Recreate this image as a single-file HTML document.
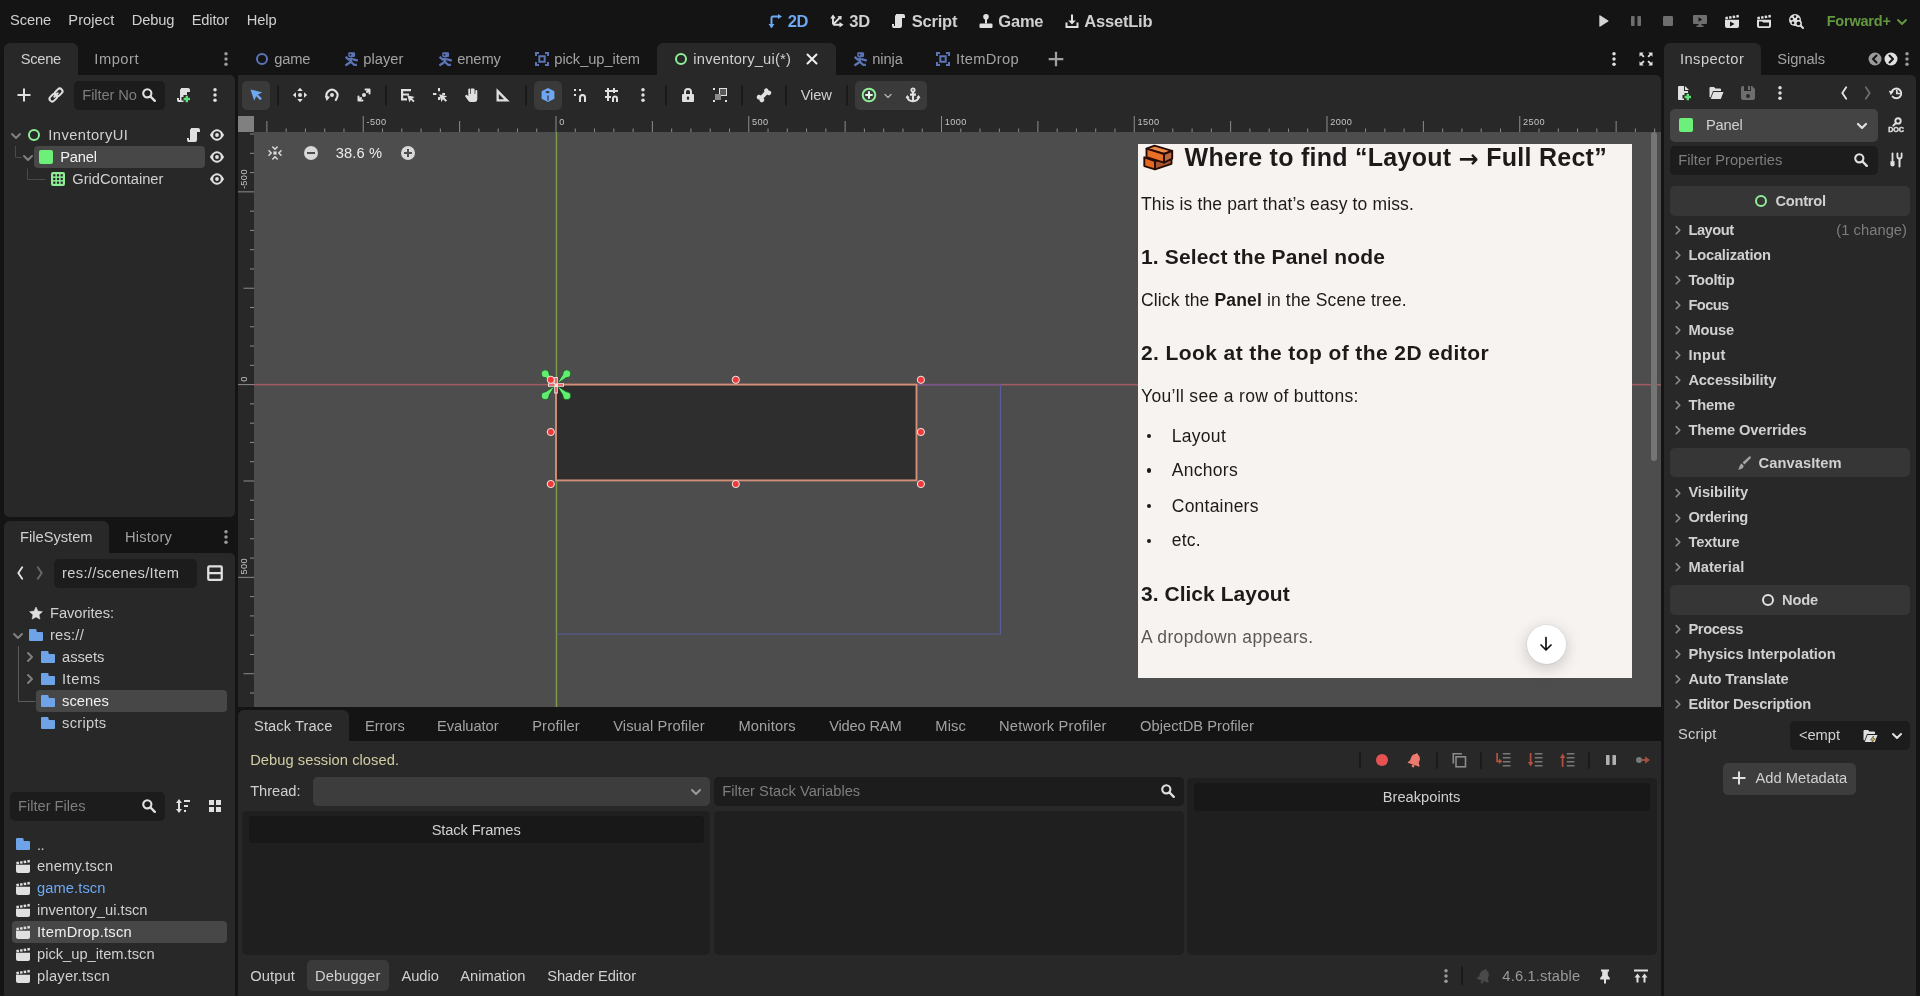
<!DOCTYPE html>
<html lang="en"><head><meta charset="utf-8"><title>Godot Editor - inventory_ui</title>
<style>
html,body{margin:0;padding:0;}
body{width:1920px;height:996px;overflow:hidden;background:#141414;font-family:"Liberation Sans", sans-serif;position:relative;}
#root{position:absolute;left:0;top:0;width:1920px;height:996px;overflow:hidden;will-change:transform;}
#root>div,#root>svg,#root>span{position:absolute;}
#root>span{white-space:nowrap;}
#root>svg{overflow:visible;}
</style></head><body><div id="root">
<div style="left:4px;top:43px;width:74px;height:33px;background:#282828;border-radius:6px 6px 0 0;"></div>
<div style="left:4px;top:75px;width:231px;height:442px;background:#282828;border-radius:0 5px 5px 5px;"></div>
<div style="left:4px;top:521px;width:105px;height:33px;background:#282828;border-radius:6px 6px 0 0;"></div>
<div style="left:4px;top:553px;width:231px;height:443px;background:#282828;border-radius:0 5px 0 0;"></div>
<div style="left:238px;top:75px;width:1423px;height:632px;background:#282828;border-radius:0 5px 0 0;"></div>
<div style="left:657px;top:43px;width:179px;height:33px;background:#282828;border-radius:6px 6px 0 0;"></div>
<div style="left:238px;top:710px;width:1423px;height:286px;background:#282828;border-radius:0px;"></div>
<div style="left:238px;top:710px;width:1423px;height:31px;background:#141414;border-radius:0px;"></div>
<div style="left:238px;top:710px;width:111px;height:32px;background:#282828;border-radius:6px 6px 0 0;"></div>
<div style="left:1664px;top:43px;width:97px;height:33px;background:#282828;border-radius:6px 6px 0 0;"></div>
<div style="left:1664px;top:75px;width:252px;height:921px;background:#282828;border-radius:0 5px 0 0;"></div>
<span style="left:10.0px;top:11.0px;font-size:14.7px;line-height:18px;color:#d0d0d0;letter-spacing:-0.13px;">Scene</span>
<span style="left:68.3px;top:11.0px;font-size:14.7px;line-height:18px;color:#d0d0d0;letter-spacing:0.04px;">Project</span>
<span style="left:131.7px;top:11.0px;font-size:14.7px;line-height:18px;color:#d0d0d0;letter-spacing:-0.14px;">Debug</span>
<span style="left:191.7px;top:11.0px;font-size:14.7px;line-height:18px;color:#d0d0d0;letter-spacing:-0.18px;">Editor</span>
<span style="left:246.7px;top:11.0px;font-size:14.7px;line-height:18px;color:#d0d0d0;letter-spacing:-0.05px;">Help</span>
<span style="left:787.7px;top:10.5px;font-size:16.5px;line-height:21px;color:#6ea8f2;font-weight:700;letter-spacing:-0.25px;">2D</span>
<span style="left:849.3px;top:10.5px;font-size:16.5px;line-height:21px;color:#d0d0d0;font-weight:700;letter-spacing:-0.20px;">3D</span>
<span style="left:911.7px;top:10.5px;font-size:16.5px;line-height:21px;color:#d0d0d0;font-weight:700;letter-spacing:-0.19px;">Script</span>
<span style="left:998.3px;top:10.5px;font-size:16.5px;line-height:21px;color:#d0d0d0;font-weight:700;letter-spacing:-0.21px;">Game</span>
<span style="left:1084.3px;top:10.5px;font-size:16.5px;line-height:21px;color:#d0d0d0;font-weight:700;letter-spacing:-0.21px;">AssetLib</span>
<span style="left:1826.7px;top:12.0px;font-size:14.5px;line-height:18px;color:#639841;font-weight:700;letter-spacing:-0.21px;">Forward+</span>
<span style="left:20.7px;top:50.0px;font-size:14.7px;line-height:18px;color:#d0d0d0;letter-spacing:-0.27px;">Scene</span>
<span style="left:94.3px;top:50.0px;font-size:14.7px;line-height:18px;color:#a3a3a3;letter-spacing:0.51px;">Import</span>
<div style="left:74px;top:81px;width:91px;height:29px;background:#1c1c1c;border-radius:5px;"></div>
<span style="left:82.3px;top:86.0px;font-size:14.7px;line-height:18px;color:#7d7d7d;letter-spacing:-0.12px;">Filter No</span>
<div style="left:34px;top:146px;width:171px;height:22px;background:#474747;border-radius:4px;"></div>
<span style="left:48.3px;top:126.0px;font-size:14.7px;line-height:18px;color:#d0d0d0;letter-spacing:0.44px;">InventoryUI</span>
<span style="left:60.3px;top:148.0px;font-size:14.7px;line-height:18px;color:#f0f0f0;letter-spacing:-0.24px;">Panel</span>
<span style="left:72.3px;top:170.0px;font-size:14.7px;line-height:18px;color:#d0d0d0;letter-spacing:-0.03px;">GridContainer</span>
<div style="left:39.3px;top:150px;width:13.5px;height:14px;background:#6df07a;border-radius:2px;"></div>
<span style="left:20.0px;top:528.0px;font-size:14.7px;line-height:18px;color:#d0d0d0;letter-spacing:-0.01px;">FileSystem</span>
<span style="left:125.0px;top:528.0px;font-size:14.7px;line-height:18px;color:#a3a3a3;letter-spacing:0.19px;">History</span>
<div style="left:54px;top:559px;width:143px;height:29px;background:#1c1c1c;border-radius:5px;"></div>
<span style="left:62.0px;top:564.0px;font-size:14.7px;line-height:18px;color:#d0d0d0;letter-spacing:0.33px;">res://scenes/Item</span>
<div style="left:36px;top:690px;width:191px;height:22px;background:#474747;border-radius:4px;"></div>
<span style="left:50.0px;top:604.0px;font-size:14.7px;line-height:18px;color:#d0d0d0;letter-spacing:-0.05px;">Favorites:</span>
<span style="left:50.0px;top:626.0px;font-size:14.7px;line-height:18px;color:#d0d0d0;letter-spacing:0.22px;">res://</span>
<span style="left:62.0px;top:648.0px;font-size:14.7px;line-height:18px;color:#d0d0d0;">assets</span>
<span style="left:62.0px;top:670.0px;font-size:14.7px;line-height:18px;color:#d0d0d0;letter-spacing:0.52px;">Items</span>
<span style="left:62.0px;top:692.0px;font-size:14.7px;line-height:18px;color:#f0f0f0;letter-spacing:0.08px;">scenes</span>
<span style="left:62.0px;top:714.0px;font-size:14.7px;line-height:18px;color:#d0d0d0;letter-spacing:0.29px;">scripts</span>
<div style="left:10px;top:792px;width:155px;height:29px;background:#1c1c1c;border-radius:5px;"></div>
<span style="left:18.0px;top:797.0px;font-size:14.7px;line-height:18px;color:#7d7d7d;letter-spacing:-0.02px;">Filter Files</span>
<div style="left:12px;top:921px;width:215px;height:22px;background:#474747;border-radius:4px;"></div>
<span style="left:37.0px;top:836.0px;font-size:14.7px;line-height:18px;color:#d0d0d0;letter-spacing:-0.59px;">..</span>
<span style="left:37.0px;top:857.0px;font-size:14.7px;line-height:18px;color:#d0d0d0;letter-spacing:0.20px;">enemy.tscn</span>
<span style="left:37.0px;top:879.0px;font-size:14.7px;line-height:18px;color:#6ea8f2;letter-spacing:0.08px;">game.tscn</span>
<span style="left:37.0px;top:901.0px;font-size:14.7px;line-height:18px;color:#d0d0d0;letter-spacing:0.02px;">inventory_ui.tscn</span>
<span style="left:37.0px;top:923.0px;font-size:14.7px;line-height:18px;color:#f0f0f0;letter-spacing:0.28px;">ItemDrop.tscn</span>
<span style="left:37.0px;top:945.0px;font-size:14.7px;line-height:18px;color:#d0d0d0;">pick_up_item.tscn</span>
<span style="left:37.0px;top:967.0px;font-size:14.7px;line-height:18px;color:#d0d0d0;letter-spacing:0.25px;">player.tscn</span>
<span style="left:274.3px;top:50.0px;font-size:14.7px;line-height:18px;color:#a3a3a3;letter-spacing:-0.19px;">game</span>
<span style="left:363.3px;top:50.0px;font-size:14.7px;line-height:18px;color:#a3a3a3;">player</span>
<span style="left:457.3px;top:50.0px;font-size:14.7px;line-height:18px;color:#a3a3a3;letter-spacing:-0.14px;">enemy</span>
<span style="left:554.3px;top:50.0px;font-size:14.7px;line-height:18px;color:#a3a3a3;letter-spacing:-0.07px;">pick_up_item</span>
<span style="left:693.3px;top:50.0px;font-size:14.7px;line-height:18px;color:#d0d0d0;letter-spacing:0.20px;">inventory_ui(*)</span>
<span style="left:872.3px;top:50.0px;font-size:14.7px;line-height:18px;color:#a3a3a3;letter-spacing:-0.13px;">ninja</span>
<span style="left:956.0px;top:50.0px;font-size:14.7px;line-height:18px;color:#a3a3a3;letter-spacing:0.32px;">ItemDrop</span>
<div style="left:242px;top:81px;width:28px;height:29px;background:#3a3a3a;border-radius:5px;"></div>
<div style="left:534px;top:81px;width:28px;height:29px;background:#3a3a3a;border-radius:5px;"></div>
<div style="left:855px;top:81px;width:72px;height:29px;background:#3a3a3a;border-radius:5px;"></div>
<div style="left:276.5px;top:85px;width:2.0px;height:21px;background:#1a1a1a;border-radius:1px;"></div>
<div style="left:384.5px;top:85px;width:2.0px;height:21px;background:#1a1a1a;border-radius:1px;"></div>
<div style="left:524.5px;top:85px;width:2.0px;height:21px;background:#1a1a1a;border-radius:1px;"></div>
<div style="left:665px;top:85px;width:2px;height:21px;background:#1a1a1a;border-radius:1px;"></div>
<div style="left:740.5px;top:85px;width:2.0px;height:21px;background:#1a1a1a;border-radius:1px;"></div>
<div style="left:784.5px;top:85px;width:2.0px;height:21px;background:#1a1a1a;border-radius:1px;"></div>
<div style="left:846px;top:85px;width:2px;height:21px;background:#1a1a1a;border-radius:1px;"></div>
<span style="left:800.7px;top:86.0px;font-size:14.7px;line-height:18px;color:#d0d0d0;letter-spacing:-0.14px;">View</span>
<div style="left:254px;top:132px;width:1407px;height:575px;background:#4d4d4d;border-radius:0px;"></div>
<div style="left:238px;top:116px;width:16px;height:16px;background:#808080;border-radius:0px;"></div>
<svg style="left:0;top:0" width="1920" height="996" viewBox="0 0 1920 996" font-family='"Liberation Sans", sans-serif'><rect x="266.38" y="121" width="1" height="11" fill="#8c8c8c"/><rect x="285.65" y="128.5" width="1" height="3.5" fill="#8c8c8c"/><rect x="304.92" y="128.5" width="1" height="3.5" fill="#8c8c8c"/><rect x="324.20" y="128.5" width="1" height="3.5" fill="#8c8c8c"/><rect x="343.48" y="128.5" width="1" height="3.5" fill="#8c8c8c"/><rect x="362.75" y="116" width="1" height="16" fill="#8c8c8c"/><text x="366.6" y="124.900" font-size="9.200" letter-spacing=".4" fill="#c4c4c4">-500</text><rect x="382.02" y="128.5" width="1" height="3.5" fill="#8c8c8c"/><rect x="401.30" y="128.5" width="1" height="3.5" fill="#8c8c8c"/><rect x="420.57" y="128.5" width="1" height="3.5" fill="#8c8c8c"/><rect x="439.85" y="128.5" width="1" height="3.5" fill="#8c8c8c"/><rect x="459.12" y="121" width="1" height="11" fill="#8c8c8c"/><rect x="478.40" y="128.5" width="1" height="3.5" fill="#8c8c8c"/><rect x="497.68" y="128.5" width="1" height="3.5" fill="#8c8c8c"/><rect x="516.95" y="128.5" width="1" height="3.5" fill="#8c8c8c"/><rect x="536.23" y="128.5" width="1" height="3.5" fill="#8c8c8c"/><rect x="555.50" y="116" width="1" height="16" fill="#8c8c8c"/><text x="559.3" y="124.900" font-size="9.200" letter-spacing=".4" fill="#c4c4c4">0</text><rect x="574.77" y="128.5" width="1" height="3.5" fill="#8c8c8c"/><rect x="594.05" y="128.5" width="1" height="3.5" fill="#8c8c8c"/><rect x="613.33" y="128.5" width="1" height="3.5" fill="#8c8c8c"/><rect x="632.60" y="128.5" width="1" height="3.5" fill="#8c8c8c"/><rect x="651.88" y="121" width="1" height="11" fill="#8c8c8c"/><rect x="671.15" y="128.5" width="1" height="3.5" fill="#8c8c8c"/><rect x="690.42" y="128.5" width="1" height="3.5" fill="#8c8c8c"/><rect x="709.70" y="128.5" width="1" height="3.5" fill="#8c8c8c"/><rect x="728.98" y="128.5" width="1" height="3.5" fill="#8c8c8c"/><rect x="748.25" y="116" width="1" height="16" fill="#8c8c8c"/><text x="752.0" y="124.900" font-size="9.200" letter-spacing=".4" fill="#c4c4c4">500</text><rect x="767.52" y="128.5" width="1" height="3.5" fill="#8c8c8c"/><rect x="786.80" y="128.5" width="1" height="3.5" fill="#8c8c8c"/><rect x="806.08" y="128.5" width="1" height="3.5" fill="#8c8c8c"/><rect x="825.35" y="128.5" width="1" height="3.5" fill="#8c8c8c"/><rect x="844.62" y="121" width="1" height="11" fill="#8c8c8c"/><rect x="863.90" y="128.5" width="1" height="3.5" fill="#8c8c8c"/><rect x="883.17" y="128.5" width="1" height="3.5" fill="#8c8c8c"/><rect x="902.45" y="128.5" width="1" height="3.5" fill="#8c8c8c"/><rect x="921.73" y="128.5" width="1" height="3.5" fill="#8c8c8c"/><rect x="941.00" y="116" width="1" height="16" fill="#8c8c8c"/><text x="944.8" y="124.900" font-size="9.200" letter-spacing=".4" fill="#c4c4c4">1000</text><rect x="960.28" y="128.5" width="1" height="3.5" fill="#8c8c8c"/><rect x="979.55" y="128.5" width="1" height="3.5" fill="#8c8c8c"/><rect x="998.83" y="128.5" width="1" height="3.5" fill="#8c8c8c"/><rect x="1018.10" y="128.5" width="1" height="3.5" fill="#8c8c8c"/><rect x="1037.38" y="121" width="1" height="11" fill="#8c8c8c"/><rect x="1056.65" y="128.5" width="1" height="3.5" fill="#8c8c8c"/><rect x="1075.93" y="128.5" width="1" height="3.5" fill="#8c8c8c"/><rect x="1095.20" y="128.5" width="1" height="3.5" fill="#8c8c8c"/><rect x="1114.47" y="128.5" width="1" height="3.5" fill="#8c8c8c"/><rect x="1133.75" y="116" width="1" height="16" fill="#8c8c8c"/><text x="1137.5" y="124.900" font-size="9.200" letter-spacing=".4" fill="#c4c4c4">1500</text><rect x="1153.03" y="128.5" width="1" height="3.5" fill="#8c8c8c"/><rect x="1172.30" y="128.5" width="1" height="3.5" fill="#8c8c8c"/><rect x="1191.58" y="128.5" width="1" height="3.5" fill="#8c8c8c"/><rect x="1210.85" y="128.5" width="1" height="3.5" fill="#8c8c8c"/><rect x="1230.12" y="121" width="1" height="11" fill="#8c8c8c"/><rect x="1249.40" y="128.5" width="1" height="3.5" fill="#8c8c8c"/><rect x="1268.68" y="128.5" width="1" height="3.5" fill="#8c8c8c"/><rect x="1287.95" y="128.5" width="1" height="3.5" fill="#8c8c8c"/><rect x="1307.22" y="128.5" width="1" height="3.5" fill="#8c8c8c"/><rect x="1326.50" y="116" width="1" height="16" fill="#8c8c8c"/><text x="1330.3" y="124.900" font-size="9.200" letter-spacing=".4" fill="#c4c4c4">2000</text><rect x="1345.78" y="128.5" width="1" height="3.5" fill="#8c8c8c"/><rect x="1365.05" y="128.5" width="1" height="3.5" fill="#8c8c8c"/><rect x="1384.33" y="128.5" width="1" height="3.5" fill="#8c8c8c"/><rect x="1403.60" y="128.5" width="1" height="3.5" fill="#8c8c8c"/><rect x="1422.88" y="121" width="1" height="11" fill="#8c8c8c"/><rect x="1442.15" y="128.5" width="1" height="3.5" fill="#8c8c8c"/><rect x="1461.43" y="128.5" width="1" height="3.5" fill="#8c8c8c"/><rect x="1480.70" y="128.5" width="1" height="3.5" fill="#8c8c8c"/><rect x="1499.97" y="128.5" width="1" height="3.5" fill="#8c8c8c"/><rect x="1519.25" y="116" width="1" height="16" fill="#8c8c8c"/><text x="1523.0" y="124.900" font-size="9.200" letter-spacing=".4" fill="#c4c4c4">2500</text><rect x="1538.53" y="128.5" width="1" height="3.5" fill="#8c8c8c"/><rect x="1557.80" y="128.5" width="1" height="3.5" fill="#8c8c8c"/><rect x="1577.08" y="128.5" width="1" height="3.5" fill="#8c8c8c"/><rect x="1596.35" y="128.5" width="1" height="3.5" fill="#8c8c8c"/><rect x="1615.62" y="121" width="1" height="11" fill="#8c8c8c"/><rect x="1634.90" y="128.5" width="1" height="3.5" fill="#8c8c8c"/><rect x="1654.17" y="128.5" width="1" height="3.5" fill="#8c8c8c"/><rect x="250" y="133.53" width="4" height="1" fill="#8c8c8c"/><rect x="250" y="152.80" width="4" height="1" fill="#8c8c8c"/><rect x="250" y="172.08" width="4" height="1" fill="#8c8c8c"/><rect x="238" y="191.35" width="16" height="1" fill="#8c8c8c"/><text transform="translate(247,189.1) rotate(-90)" font-size="9.200" letter-spacing=".4" fill="#c4c4c4">-500</text><rect x="250" y="210.63" width="4" height="1" fill="#8c8c8c"/><rect x="250" y="229.90" width="4" height="1" fill="#8c8c8c"/><rect x="250" y="249.18" width="4" height="1" fill="#8c8c8c"/><rect x="250" y="268.45" width="4" height="1" fill="#8c8c8c"/><rect x="243.5" y="287.73" width="10.5" height="1" fill="#8c8c8c"/><rect x="250" y="307.00" width="4" height="1" fill="#8c8c8c"/><rect x="250" y="326.28" width="4" height="1" fill="#8c8c8c"/><rect x="250" y="345.55" width="4" height="1" fill="#8c8c8c"/><rect x="250" y="364.83" width="4" height="1" fill="#8c8c8c"/><rect x="238" y="384.10" width="16" height="1" fill="#8c8c8c"/><text transform="translate(247,381.8) rotate(-90)" font-size="9.200" letter-spacing=".4" fill="#c4c4c4">0</text><rect x="250" y="403.38" width="4" height="1" fill="#8c8c8c"/><rect x="250" y="422.65" width="4" height="1" fill="#8c8c8c"/><rect x="250" y="441.93" width="4" height="1" fill="#8c8c8c"/><rect x="250" y="461.20" width="4" height="1" fill="#8c8c8c"/><rect x="243.5" y="480.48" width="10.5" height="1" fill="#8c8c8c"/><rect x="250" y="499.75" width="4" height="1" fill="#8c8c8c"/><rect x="250" y="519.03" width="4" height="1" fill="#8c8c8c"/><rect x="250" y="538.30" width="4" height="1" fill="#8c8c8c"/><rect x="250" y="557.58" width="4" height="1" fill="#8c8c8c"/><rect x="238" y="576.85" width="16" height="1" fill="#8c8c8c"/><text transform="translate(247,574.6) rotate(-90)" font-size="9.200" letter-spacing=".4" fill="#c4c4c4">500</text><rect x="250" y="596.12" width="4" height="1" fill="#8c8c8c"/><rect x="250" y="615.40" width="4" height="1" fill="#8c8c8c"/><rect x="250" y="634.68" width="4" height="1" fill="#8c8c8c"/><rect x="250" y="653.95" width="4" height="1" fill="#8c8c8c"/><rect x="243.5" y="673.23" width="10.5" height="1" fill="#8c8c8c"/><rect x="250" y="692.50" width="4" height="1" fill="#8c8c8c"/></svg>
<svg style="left:0;top:0" width="1920" height="996" viewBox="0 0 1920 996"><rect x="254" y="383.900" width="1407" height="1.500" fill="#a35a63"/><rect x="555.700" y="132" width="1.500" height="575" fill="#7a9a48"/><path d="M917 384.7H1000.5V634H556.5" fill="none" stroke="#5b5c9b" stroke-width="1.2"/><rect x="917" y="384.1" width="83.5" height="1.2" fill="#7d5486"/><rect x="556" y="384.6" width="360.5" height="95.8" fill="#2e2e2e" stroke="#d48f78" stroke-width="1.900"/><path d="M547.4 371.6L554.5 383.3L543.0 376.0z" fill="#61ee6f" stroke="#1d4a22" stroke-width=".8"/><circle cx="545.2" cy="373.8" r="4" fill="#61ee6f" stroke="#1d4a22" stroke-width=".8"/><path d="M547.0 372.0L553.5 382.3L543.4 375.6z" fill="#61ee6f"/><path d="M569.0 376.0L557.5 383.3L564.6 371.6z" fill="#61ee6f" stroke="#1d4a22" stroke-width=".8"/><circle cx="566.8" cy="373.8" r="4" fill="#61ee6f" stroke="#1d4a22" stroke-width=".8"/><path d="M568.6 375.6L558.5 382.3L565.0 372.0z" fill="#61ee6f"/><path d="M543.0 393.6L554.5 386.3L547.4 398.0z" fill="#61ee6f" stroke="#1d4a22" stroke-width=".8"/><circle cx="545.2" cy="395.8" r="4" fill="#61ee6f" stroke="#1d4a22" stroke-width=".8"/><path d="M543.4 394.0L553.5 387.3L547.0 397.6z" fill="#61ee6f"/><path d="M564.6 398.0L557.5 386.3L569.0 393.6z" fill="#61ee6f" stroke="#1d4a22" stroke-width=".8"/><circle cx="566.8" cy="395.8" r="4" fill="#61ee6f" stroke="#1d4a22" stroke-width=".8"/><path d="M565.0 397.6L558.5 387.3L568.6 394.0z" fill="#61ee6f"/><path d="M556 377v16.500M548 385h16" stroke="#f3e3dc" stroke-width="3.600"/><path d="M556 378v5.500M556 387v5.500M549 385h5.500M558 385h5" stroke="#e0464a" stroke-width="1.500"/><circle cx="550.8" cy="379.8" r="3.6" fill="#ee3a3a" stroke="#f6e9e6" stroke-width="1"/><circle cx="735.8" cy="379.8" r="3.6" fill="#ee3a3a" stroke="#f6e9e6" stroke-width="1"/><circle cx="920.9" cy="379.8" r="3.6" fill="#ee3a3a" stroke="#f6e9e6" stroke-width="1"/><circle cx="550.8" cy="432" r="3.6" fill="#ee3a3a" stroke="#f6e9e6" stroke-width="1"/><circle cx="920.9" cy="432" r="3.6" fill="#ee3a3a" stroke="#f6e9e6" stroke-width="1"/><circle cx="550.8" cy="484" r="3.6" fill="#ee3a3a" stroke="#f6e9e6" stroke-width="1"/><circle cx="735.8" cy="484" r="3.6" fill="#ee3a3a" stroke="#f6e9e6" stroke-width="1"/><circle cx="920.9" cy="484" r="3.6" fill="#ee3a3a" stroke="#f6e9e6" stroke-width="1"/></svg>
<span style="left:335.7px;top:144.3px;font-size:14.7px;line-height:18px;color:#ececec;letter-spacing:0.14px;">38.6 %</span>
<div style="left:1651px;top:132px;width:6px;height:329px;background:#757575;border-radius:3px 3px 3px 3px;"></div>
<div style="left:1138px;top:144px;width:494px;height:533.5px;background:#f7f3f0;border-radius:0px;"></div>
<svg style="left:0;top:0" width="1920" height="996" viewBox="0 0 1920 996"><g stroke="#260b06" stroke-width="1.900" stroke-linejoin="round"><path d="M1144.300 157.300L1155 161v8.300l-10.700-3.200z" fill="#e4681f"/><path d="M1155 161l16.500-3.500v6.300L1155 169.300z" fill="#a9552f"/><path d="M1146.500 148.600l8-3 17.700 5.200-8.200 3.200z" fill="#f08a4a"/><path d="M1146.500 148.600L1164 154v8.600l-17.500-5.400z" fill="#e96f26"/><path d="M1164 154l8.200-3.200v7.800l-8.200 4z" fill="#b9673f"/></g></svg>
<span style="left:1184.6px;top:142.2px;font-size:25px;line-height:31px;color:#1d1b1a;font-weight:700;letter-spacing:0.27px;">Where to find “Layout <span style="font-family:DejaVu Sans,sans-serif;font-size:24px;line-height:0;font-weight:700;position:relative;top:0.5px">→</span> Full Rect”</span>
<span style="left:1141.0px;top:193.2px;font-size:17.5px;line-height:22px;color:#1d1b1a;letter-spacing:0.13px;">This is the part that’s easy to miss.</span>
<span style="left:1141.0px;top:243.6px;font-size:21px;line-height:26px;color:#1d1b1a;font-weight:700;letter-spacing:0.15px;">1. Select the Panel node</span>
<span style="left:1141.0px;top:288.7px;font-size:17.5px;line-height:22px;color:#1d1b1a;letter-spacing:0.15px;">Click the <b>Panel</b> in the Scene tree.</span>
<span style="left:1141.0px;top:339.7px;font-size:21px;line-height:26px;color:#1d1b1a;font-weight:700;letter-spacing:0.41px;">2. Look at the top of the 2D editor</span>
<span style="left:1141.0px;top:384.8px;font-size:17.5px;line-height:22px;color:#1d1b1a;letter-spacing:0.33px;">You’ll see a row of buttons:</span>
<span style="left:1171.8px;top:424.6px;font-size:17.5px;line-height:22px;color:#1d1b1a;letter-spacing:0.28px;">Layout</span>
<div style="left:1146.9px;top:433.8px;width:4.599999999999909px;height:4.600000000000023px;background:#1d1b1a;border-radius:50%;"></div>
<span style="left:1171.8px;top:459.2px;font-size:17.5px;line-height:22px;color:#1d1b1a;letter-spacing:0.29px;">Anchors</span>
<div style="left:1146.9px;top:468.4px;width:4.599999999999909px;height:4.600000000000023px;background:#1d1b1a;border-radius:50%;"></div>
<span style="left:1171.8px;top:494.5px;font-size:17.5px;line-height:22px;color:#1d1b1a;letter-spacing:0.22px;">Containers</span>
<div style="left:1146.9px;top:503.7px;width:4.599999999999909px;height:4.600000000000023px;background:#1d1b1a;border-radius:50%;"></div>
<span style="left:1171.8px;top:529.4px;font-size:17.5px;line-height:22px;color:#1d1b1a;letter-spacing:0.17px;">etc.</span>
<div style="left:1146.9px;top:538.6px;width:4.599999999999909px;height:4.599999999999909px;background:#1d1b1a;border-radius:50%;"></div>
<span style="left:1141.0px;top:580.7px;font-size:21px;line-height:26px;color:#1d1b1a;font-weight:700;letter-spacing:0.03px;">3. Click Layout</span>
<span style="left:1141.0px;top:625.5px;font-size:17.5px;line-height:22px;color:#5a5856;letter-spacing:0.37px;">A dropdown appears.</span>
<div style="left:1138px;top:650px;width:494px;height:27.5px;background:linear-gradient(rgba(247,243,240,0),rgba(247,243,240,0.9));border-radius:0px;"></div>
<div style="left:1526.7px;top:624.8px;width:39.0px;height:39.0px;background:#ffffff;border-radius:50%;box-shadow:0 4px 16px rgba(0,0,0,0.2),0 0 0 1px rgba(0,0,0,0.04);"></div>
<svg style="left:1536.2px;top:634.3px" width="20" height="20" viewBox="0 0 20 20"><path d="M10 3.5v12M5 11l5 5 5-5" fill="none" stroke="#111" stroke-width="1.7" stroke-linecap="round" stroke-linejoin="round"/></svg>
<span style="left:254.0px;top:717.0px;font-size:14.7px;line-height:18px;color:#d0d0d0;letter-spacing:0.08px;">Stack Trace</span>
<span style="left:365.0px;top:717.0px;font-size:14.7px;line-height:18px;color:#a3a3a3;letter-spacing:-0.05px;">Errors</span>
<span style="left:437.0px;top:717.0px;font-size:14.7px;line-height:18px;color:#a3a3a3;letter-spacing:-0.06px;">Evaluator</span>
<span style="left:532.2px;top:717.0px;font-size:14.7px;line-height:18px;color:#a3a3a3;letter-spacing:0.13px;">Profiler</span>
<span style="left:613.2px;top:717.0px;font-size:14.7px;line-height:18px;color:#a3a3a3;letter-spacing:0.08px;">Visual Profiler</span>
<span style="left:738.4px;top:717.0px;font-size:14.7px;line-height:18px;color:#a3a3a3;letter-spacing:0.13px;">Monitors</span>
<span style="left:829.2px;top:717.0px;font-size:14.7px;line-height:18px;color:#a3a3a3;letter-spacing:-0.19px;">Video RAM</span>
<span style="left:935.3px;top:717.0px;font-size:14.7px;line-height:18px;color:#a3a3a3;letter-spacing:0.13px;">Misc</span>
<span style="left:999.0px;top:717.0px;font-size:14.7px;line-height:18px;color:#a3a3a3;letter-spacing:0.20px;">Network Profiler</span>
<span style="left:1140.0px;top:717.0px;font-size:14.7px;line-height:18px;color:#a3a3a3;letter-spacing:0.03px;">ObjectDB Profiler</span>
<span style="left:250.2px;top:751.0px;font-size:14.7px;line-height:18px;color:#d3cda4;letter-spacing:0.05px;">Debug session closed.</span>
<span style="left:250.2px;top:781.7px;font-size:14.7px;line-height:18px;color:#d0d0d0;letter-spacing:-0.05px;">Thread:</span>
<div style="left:313px;top:777px;width:397px;height:29px;background:#3d3d3d;border-radius:5px;"></div>
<div style="left:714px;top:777px;width:470px;height:29px;background:#1c1c1c;border-radius:5px;"></div>
<span style="left:722.3px;top:781.7px;font-size:14.7px;line-height:18px;color:#7d7d7d;letter-spacing:0.01px;">Filter Stack Variables</span>
<div style="left:242px;top:811px;width:468px;height:144px;background:#1f1f1f;border-radius:5px;"></div>
<div style="left:249px;top:816px;width:455px;height:27px;background:#181818;border-radius:4px;"></div>
<span style="left:431.7px;top:820.7px;font-size:14.7px;line-height:18px;color:#d0d0d0;letter-spacing:-0.14px;">Stack Frames</span>
<div style="left:714px;top:811px;width:470px;height:144px;background:#1f1f1f;border-radius:5px;"></div>
<div style="left:1187px;top:777.5px;width:470px;height:177.5px;background:#1f1f1f;border-radius:5px;"></div>
<div style="left:1193.7px;top:783px;width:456.29999999999995px;height:27.5px;background:#181818;border-radius:4px;"></div>
<span style="left:1382.7px;top:787.7px;font-size:14.7px;line-height:18px;color:#d0d0d0;">Breakpoints</span>
<div style="left:307px;top:960px;width:81.5px;height:31px;background:#3a3a3a;border-radius:5px;"></div>
<span style="left:250.2px;top:966.6px;font-size:14.7px;line-height:18px;color:#d0d0d0;letter-spacing:0.10px;">Output</span>
<span style="left:315.0px;top:966.6px;font-size:14.7px;line-height:18px;color:#d0d0d0;letter-spacing:0.11px;">Debugger</span>
<span style="left:401.4px;top:966.6px;font-size:14.7px;line-height:18px;color:#d0d0d0;letter-spacing:-0.02px;">Audio</span>
<span style="left:460.2px;top:966.6px;font-size:14.7px;line-height:18px;color:#d0d0d0;">Animation</span>
<span style="left:547.2px;top:966.6px;font-size:14.7px;line-height:18px;color:#d0d0d0;letter-spacing:-0.08px;">Shader Editor</span>
<span style="left:1502.3px;top:966.6px;font-size:14.7px;line-height:18px;color:#9a9a9a;letter-spacing:0.17px;">4.6.1.stable</span>
<div style="left:1358.8px;top:752px;width:2.0px;height:17px;background:#1a1a1a;border-radius:1px;"></div>
<div style="left:1435.7px;top:752px;width:2.0px;height:17px;background:#1a1a1a;border-radius:1px;"></div>
<div style="left:1479.5px;top:752px;width:2.0px;height:17px;background:#1a1a1a;border-radius:1px;"></div>
<div style="left:1588px;top:752px;width:2px;height:17px;background:#1a1a1a;border-radius:1px;"></div>
<div style="left:1461px;top:966px;width:2px;height:19px;background:#1a1a1a;border-radius:1px;"></div>
<span style="left:1680.0px;top:50.0px;font-size:14.7px;line-height:18px;color:#d0d0d0;letter-spacing:0.43px;">Inspector</span>
<span style="left:1777.3px;top:50.0px;font-size:14.7px;line-height:18px;color:#a3a3a3;letter-spacing:-0.07px;">Signals</span>
<div style="left:1670px;top:109px;width:208px;height:32.5px;background:#444444;border-radius:5px;"></div>
<div style="left:1679px;top:118px;width:14px;height:14px;background:#6df07a;border-radius:2px;"></div>
<span style="left:1706.0px;top:116.0px;font-size:14.7px;line-height:18px;color:#d0d0d0;letter-spacing:-0.18px;">Panel</span>
<div style="left:1670px;top:146px;width:208px;height:28.5px;background:#1c1c1c;border-radius:5px;"></div>
<span style="left:1678.3px;top:151.0px;font-size:14.7px;line-height:18px;color:#7d7d7d;letter-spacing:0.02px;">Filter Properties</span>
<div style="left:1670px;top:185.5px;width:240px;height:30.0px;background:#363636;border-radius:5px;"></div>
<span style="left:1775.4px;top:191.7px;font-size:14.7px;line-height:18px;color:#d0d0d0;font-weight:700;letter-spacing:-0.27px;">Control</span>
<div style="left:1670px;top:447.5px;width:240px;height:29.5px;background:#363636;border-radius:5px;"></div>
<span style="left:1758.5px;top:453.7px;font-size:14.7px;line-height:18px;color:#d0d0d0;font-weight:700;letter-spacing:0.07px;">CanvasItem</span>
<div style="left:1670px;top:584.5px;width:240px;height:30.0px;background:#363636;border-radius:5px;"></div>
<span style="left:1782.0px;top:590.7px;font-size:14.7px;line-height:18px;color:#d0d0d0;font-weight:700;letter-spacing:-0.18px;">Node</span>
<span style="left:1688.4px;top:220.7px;font-size:14.7px;line-height:18px;color:#d0d0d0;font-weight:700;letter-spacing:-0.46px;">Layout</span>
<svg style="left:1674px;top:225.2px" width="8" height="10" viewBox="0 0 8 10"><path d="M2.2 1.6L5.8 5.2 2.2 8.8" fill="none" stroke="#8d8d8d" stroke-width="1.6" stroke-linecap="round" stroke-linejoin="round"/></svg>
<span style="left:1688.4px;top:245.7px;font-size:14.7px;line-height:18px;color:#d0d0d0;font-weight:700;letter-spacing:-0.20px;">Localization</span>
<svg style="left:1674px;top:250.2px" width="8" height="10" viewBox="0 0 8 10"><path d="M2.2 1.6L5.8 5.2 2.2 8.8" fill="none" stroke="#8d8d8d" stroke-width="1.6" stroke-linecap="round" stroke-linejoin="round"/></svg>
<span style="left:1688.4px;top:270.6px;font-size:14.7px;line-height:18px;color:#d0d0d0;font-weight:700;letter-spacing:-0.27px;">Tooltip</span>
<svg style="left:1674px;top:275.1px" width="8" height="10" viewBox="0 0 8 10"><path d="M2.2 1.6L5.8 5.2 2.2 8.8" fill="none" stroke="#8d8d8d" stroke-width="1.6" stroke-linecap="round" stroke-linejoin="round"/></svg>
<span style="left:1688.4px;top:295.7px;font-size:14.7px;line-height:18px;color:#d0d0d0;font-weight:700;letter-spacing:-0.59px;">Focus</span>
<svg style="left:1674px;top:300.2px" width="8" height="10" viewBox="0 0 8 10"><path d="M2.2 1.6L5.8 5.2 2.2 8.8" fill="none" stroke="#8d8d8d" stroke-width="1.6" stroke-linecap="round" stroke-linejoin="round"/></svg>
<span style="left:1688.4px;top:320.8px;font-size:14.7px;line-height:18px;color:#d0d0d0;font-weight:700;letter-spacing:-0.18px;">Mouse</span>
<svg style="left:1674px;top:325.3px" width="8" height="10" viewBox="0 0 8 10"><path d="M2.2 1.6L5.8 5.2 2.2 8.8" fill="none" stroke="#8d8d8d" stroke-width="1.6" stroke-linecap="round" stroke-linejoin="round"/></svg>
<span style="left:1688.4px;top:345.8px;font-size:14.7px;line-height:18px;color:#d0d0d0;font-weight:700;letter-spacing:0.28px;">Input</span>
<svg style="left:1674px;top:350.3px" width="8" height="10" viewBox="0 0 8 10"><path d="M2.2 1.6L5.8 5.2 2.2 8.8" fill="none" stroke="#8d8d8d" stroke-width="1.6" stroke-linecap="round" stroke-linejoin="round"/></svg>
<span style="left:1688.4px;top:370.8px;font-size:14.7px;line-height:18px;color:#d0d0d0;font-weight:700;letter-spacing:-0.15px;">Accessibility</span>
<svg style="left:1674px;top:375.3px" width="8" height="10" viewBox="0 0 8 10"><path d="M2.2 1.6L5.8 5.2 2.2 8.8" fill="none" stroke="#8d8d8d" stroke-width="1.6" stroke-linecap="round" stroke-linejoin="round"/></svg>
<span style="left:1688.4px;top:395.9px;font-size:14.7px;line-height:18px;color:#d0d0d0;font-weight:700;letter-spacing:-0.15px;">Theme</span>
<svg style="left:1674px;top:400.4px" width="8" height="10" viewBox="0 0 8 10"><path d="M2.2 1.6L5.8 5.2 2.2 8.8" fill="none" stroke="#8d8d8d" stroke-width="1.6" stroke-linecap="round" stroke-linejoin="round"/></svg>
<span style="left:1688.4px;top:420.8px;font-size:14.7px;line-height:18px;color:#d0d0d0;font-weight:700;letter-spacing:-0.13px;">Theme Overrides</span>
<svg style="left:1674px;top:425.3px" width="8" height="10" viewBox="0 0 8 10"><path d="M2.2 1.6L5.8 5.2 2.2 8.8" fill="none" stroke="#8d8d8d" stroke-width="1.6" stroke-linecap="round" stroke-linejoin="round"/></svg>
<span style="left:1688.4px;top:483.2px;font-size:14.7px;line-height:18px;color:#d0d0d0;font-weight:700;letter-spacing:-0.05px;">Visibility</span>
<svg style="left:1674px;top:487.7px" width="8" height="10" viewBox="0 0 8 10"><path d="M2.2 1.6L5.8 5.2 2.2 8.8" fill="none" stroke="#8d8d8d" stroke-width="1.6" stroke-linecap="round" stroke-linejoin="round"/></svg>
<span style="left:1688.4px;top:508.0px;font-size:14.7px;line-height:18px;color:#d0d0d0;font-weight:700;letter-spacing:-0.30px;">Ordering</span>
<svg style="left:1674px;top:512.5px" width="8" height="10" viewBox="0 0 8 10"><path d="M2.2 1.6L5.8 5.2 2.2 8.8" fill="none" stroke="#8d8d8d" stroke-width="1.6" stroke-linecap="round" stroke-linejoin="round"/></svg>
<span style="left:1688.4px;top:532.8px;font-size:14.7px;line-height:18px;color:#d0d0d0;font-weight:700;letter-spacing:-0.12px;">Texture</span>
<svg style="left:1674px;top:537.3px" width="8" height="10" viewBox="0 0 8 10"><path d="M2.2 1.6L5.8 5.2 2.2 8.8" fill="none" stroke="#8d8d8d" stroke-width="1.6" stroke-linecap="round" stroke-linejoin="round"/></svg>
<span style="left:1688.4px;top:557.6px;font-size:14.7px;line-height:18px;color:#d0d0d0;font-weight:700;letter-spacing:0.05px;">Material</span>
<svg style="left:1674px;top:562.1px" width="8" height="10" viewBox="0 0 8 10"><path d="M2.2 1.6L5.8 5.2 2.2 8.8" fill="none" stroke="#8d8d8d" stroke-width="1.6" stroke-linecap="round" stroke-linejoin="round"/></svg>
<span style="left:1688.4px;top:619.7px;font-size:14.7px;line-height:18px;color:#d0d0d0;font-weight:700;letter-spacing:-0.37px;">Process</span>
<svg style="left:1674px;top:624.2px" width="8" height="10" viewBox="0 0 8 10"><path d="M2.2 1.6L5.8 5.2 2.2 8.8" fill="none" stroke="#8d8d8d" stroke-width="1.6" stroke-linecap="round" stroke-linejoin="round"/></svg>
<span style="left:1688.4px;top:644.7px;font-size:14.7px;line-height:18px;color:#d0d0d0;font-weight:700;letter-spacing:-0.06px;">Physics Interpolation</span>
<svg style="left:1674px;top:649.2px" width="8" height="10" viewBox="0 0 8 10"><path d="M2.2 1.6L5.8 5.2 2.2 8.8" fill="none" stroke="#8d8d8d" stroke-width="1.6" stroke-linecap="round" stroke-linejoin="round"/></svg>
<span style="left:1688.4px;top:669.7px;font-size:14.7px;line-height:18px;color:#d0d0d0;font-weight:700;letter-spacing:-0.13px;">Auto Translate</span>
<svg style="left:1674px;top:674.2px" width="8" height="10" viewBox="0 0 8 10"><path d="M2.2 1.6L5.8 5.2 2.2 8.8" fill="none" stroke="#8d8d8d" stroke-width="1.6" stroke-linecap="round" stroke-linejoin="round"/></svg>
<span style="left:1688.4px;top:694.7px;font-size:14.7px;line-height:18px;color:#d0d0d0;font-weight:700;letter-spacing:-0.27px;">Editor Description</span>
<svg style="left:1674px;top:699.2px" width="8" height="10" viewBox="0 0 8 10"><path d="M2.2 1.6L5.8 5.2 2.2 8.8" fill="none" stroke="#8d8d8d" stroke-width="1.6" stroke-linecap="round" stroke-linejoin="round"/></svg>
<span style="left:1836.3px;top:220.7px;font-size:14.7px;line-height:18px;color:#7d7d7d;letter-spacing:0.05px;">(1 change)</span>
<span style="left:1678.0px;top:724.7px;font-size:14.7px;line-height:18px;color:#d0d0d0;letter-spacing:0.18px;">Script</span>
<div style="left:1790px;top:721px;width:120px;height:29px;background:#1c1c1c;border-radius:5px;"></div>
<span style="left:1798.9px;top:726.0px;font-size:14.7px;line-height:18px;color:#d0d0d0;letter-spacing:-0.03px;">&lt;empt</span>
<div style="left:1723px;top:762.5px;width:133px;height:32.0px;background:#3d3d3d;border-radius:5px;"></div>
<span style="left:1755.5px;top:768.7px;font-size:14.7px;line-height:18px;color:#d0d0d0;letter-spacing:0.03px;">Add Metadata</span>
<svg style="left:218.0px;top:51.0px" width="16" height="16" viewBox="0 0 16 16"><circle cx="8" cy="2.800" r="1.750" fill="#9a9a9a"/><circle cx="8" cy="8" r="1.750" fill="#9a9a9a"/><circle cx="8" cy="13.200" r="1.750" fill="#9a9a9a"/></svg>
<svg style="left:218.0px;top:529.0px" width="16" height="16" viewBox="0 0 16 16"><circle cx="8" cy="2.800" r="1.750" fill="#9a9a9a"/><circle cx="8" cy="8" r="1.750" fill="#9a9a9a"/><circle cx="8" cy="13.200" r="1.750" fill="#9a9a9a"/></svg>
<svg style="left:16.0px;top:87.0px" width="16" height="16" viewBox="0 0 16 16"><path d="M7 1.5v5.5H1.5v2H7v5.5h2V9h5.5V7H9V1.5z" fill="#e0e0e0"/></svg>
<svg style="left:47.7px;top:87.0px" width="16" height="16" viewBox="0 0 16 16"><g transform="rotate(-45 8 8)" fill="none" stroke="#e0e0e0" stroke-width="2"><rect x="0" y="5.300" width="8.400" height="5.400" rx="2.700"/><rect x="7.600" y="5.300" width="8.400" height="5.400" rx="2.700"/></g><path d="M6.300 9.700l3.400-3.400" stroke="#e0e0e0" stroke-width="2" stroke-linecap="round"/></svg>
<svg style="left:140.5px;top:87.0px" width="16" height="16" viewBox="0 0 16 16"><circle cx="6.3" cy="6.3" r="4.1" fill="none" stroke="#e0e0e0" stroke-width="2.1"/><path d="M9.5 9.5l4.3 4.3" stroke="#e0e0e0" stroke-width="2.4" stroke-linecap="round"/></svg>
<svg style="left:175.3px;top:87.0px" width="16" height="16" viewBox="0 0 16 16"><path d="M6 1v1a1 1 0 0 0-1 1v10H4v-2H2v2a1 1 0 0 0 .5.866A1 1 0 0 0 3 15h5.5v-1.5h-2v-3.5h2V8h3.5V5h3V3a2 2 0 0 0-2-2z" fill="#e0e0e0"/><path d="M13 13.2h2v-2.4h-2v-2h-2.4v2h-2v2.4h2v2H13z" fill="#5fe07a"/></svg>
<svg style="left:207.0px;top:87.0px" width="16" height="16" viewBox="0 0 16 16"><circle cx="8" cy="2.800" r="1.750" fill="#e0e0e0"/><circle cx="8" cy="8" r="1.750" fill="#e0e0e0"/><circle cx="8" cy="13.200" r="1.750" fill="#e0e0e0"/></svg>
<svg style="left:7.7px;top:127.5px" width="16" height="16" viewBox="0 0 16 16"><path d="M4 6l4 4 4-4" fill="none" stroke="#808080" stroke-width="2" stroke-linecap="round" stroke-linejoin="round"/></svg>
<svg style="left:26.0px;top:127.0px" width="16" height="16" viewBox="0 0 16 16"><circle cx="8" cy="8" r="5" fill="none" stroke="#8eef97" stroke-width="2"/></svg>
<svg style="left:184.7px;top:127.0px" width="16" height="16" viewBox="0 0 16 16"><path d="M6 1v1a1 1 0 0 0-1 1v10H4v-2H2v2a1 1 0 0 0 .5.866A1 1 0 0 0 3 15h7a2 2 0 0 0 2-2V5h3V3a2 2 0 0 0-2-2z" fill="#e0e0e0"/></svg>
<svg style="left:208.7px;top:127.0px" width="16" height="16" viewBox="0 0 16 16"><path d="M8 2.3C3.6 2.3 1 8 1 8s2.6 5.7 7 5.7S15 8 15 8s-2.6-5.7-7-5.7zm0 1.9a3.8 3.8 0 0 1 0 7.6 3.8 3.8 0 0 1 0-7.6z" fill="#e0e0e0"/><circle cx="8" cy="8" r="1.9" fill="#e0e0e0"/></svg>
<svg style="left:19.7px;top:149.5px" width="16" height="16" viewBox="0 0 16 16"><path d="M4 6l4 4 4-4" fill="none" stroke="#808080" stroke-width="2" stroke-linecap="round" stroke-linejoin="round"/></svg>
<svg style="left:208.7px;top:149.0px" width="16" height="16" viewBox="0 0 16 16"><path d="M8 2.3C3.6 2.3 1 8 1 8s2.6 5.7 7 5.7S15 8 15 8s-2.6-5.7-7-5.7zm0 1.9a3.8 3.8 0 0 1 0 7.6 3.8 3.8 0 0 1 0-7.6z" fill="#e0e0e0"/><circle cx="8" cy="8" r="1.9" fill="#e0e0e0"/></svg>
<svg style="left:49.7px;top:171.0px" width="16" height="16" viewBox="0 0 16 16"><rect x="1" y="1" width="14" height="14" rx="2" fill="#8eef97"/><rect x="3.2" y="3.2" width="2.2" height="2.2" fill="#272727"/><rect x="3.2" y="6.9" width="2.2" height="2.2" fill="#272727"/><rect x="3.2" y="10.6" width="2.2" height="2.2" fill="#272727"/><rect x="6.9" y="3.2" width="2.2" height="2.2" fill="#272727"/><rect x="6.9" y="6.9" width="2.2" height="2.2" fill="#272727"/><rect x="6.9" y="10.6" width="2.2" height="2.2" fill="#272727"/><rect x="10.6" y="3.2" width="2.2" height="2.2" fill="#272727"/><rect x="10.6" y="6.9" width="2.2" height="2.2" fill="#272727"/><rect x="10.6" y="10.6" width="2.2" height="2.2" fill="#272727"/></svg>
<svg style="left:208.7px;top:171.0px" width="16" height="16" viewBox="0 0 16 16"><path d="M8 2.3C3.6 2.3 1 8 1 8s2.6 5.7 7 5.7S15 8 15 8s-2.6-5.7-7-5.7zm0 1.9a3.8 3.8 0 0 1 0 7.6 3.8 3.8 0 0 1 0-7.6z" fill="#e0e0e0"/><circle cx="8" cy="8" r="1.9" fill="#e0e0e0"/></svg>
<svg style="left:0;top:0" width="240" height="996" viewBox="0 0 240 996"><path d="M15.500 146v11.500h6M27.500 168.500v11h18" fill="none" stroke="#4a4a4a" stroke-width="1"/><path d="M18.500 646v55.500h17" fill="none" stroke="#5a5a5a" stroke-width="1"/></svg>
<svg style="left:12px;top:565px" width="16" height="16" viewBox="0 0 16 16"><path d="M10.200 2.200L6.300 8l3.900 5.800" fill="none" stroke="#e0e0e0" stroke-width="1.900" stroke-linecap="round" stroke-linejoin="round"/></svg>
<svg style="left:31.500px;top:565px" width="16" height="16" viewBox="0 0 16 16"><path d="M5.800 2.200L9.700 8l-3.900 5.800" fill="none" stroke="#6a6a6a" stroke-width="1.900" stroke-linecap="round" stroke-linejoin="round"/></svg>
<svg style="left:206.0px;top:564.0px" width="18" height="18" viewBox="0 0 16 16"><path d="M3 1a2 2 0 0 0-2 2v10a2 2 0 0 0 2 2h10a2 2 0 0 0 2-2V3a2 2 0 0 0-2-2zm0 2h10v4H3zm0 6h10v4H3z" fill="#e0e0e0"/></svg>
<svg style="left:28.0px;top:605.0px" width="16" height="16" viewBox="0 0 16 16"><path d="M8 2l1.900 4.100 4.500.55-3.350 3.050.9 4.450L8 11.950l-3.950 2.200.9-4.450L1.600 6.650l4.500-.55z" fill="#e0e0e0" stroke="#e0e0e0" stroke-width=".5" stroke-linejoin="round"/></svg>
<svg style="left:10.0px;top:628.0px" width="16" height="16" viewBox="0 0 16 16"><path d="M4 6l4 4 4-4" fill="none" stroke="#808080" stroke-width="2" stroke-linecap="round" stroke-linejoin="round"/></svg>
<svg style="left:28.0px;top:627.0px" width="16" height="16" viewBox="0 0 16 16"><path d="M2 2a1 1 0 0 0-1 1v10a1 1 0 0 0 1 1h12a1 1 0 0 0 1-1V6a1 1 0 0 0-1-1H9.5a1 1 0 0 1-1-1V3a1 1 0 0 0-1-1z" fill="#6fa3e8"/></svg>
<svg style="left:22.0px;top:649.0px" width="16" height="16" viewBox="0 0 16 16"><path d="M6 4l4 4-4 4" fill="none" stroke="#808080" stroke-width="2" stroke-linecap="round" stroke-linejoin="round"/></svg>
<svg style="left:40.0px;top:649.0px" width="16" height="16" viewBox="0 0 16 16"><path d="M2 2a1 1 0 0 0-1 1v10a1 1 0 0 0 1 1h12a1 1 0 0 0 1-1V6a1 1 0 0 0-1-1H9.5a1 1 0 0 1-1-1V3a1 1 0 0 0-1-1z" fill="#6fa3e8"/></svg>
<svg style="left:22.0px;top:671.0px" width="16" height="16" viewBox="0 0 16 16"><path d="M6 4l4 4-4 4" fill="none" stroke="#808080" stroke-width="2" stroke-linecap="round" stroke-linejoin="round"/></svg>
<svg style="left:40.0px;top:671.0px" width="16" height="16" viewBox="0 0 16 16"><path d="M2 2a1 1 0 0 0-1 1v10a1 1 0 0 0 1 1h12a1 1 0 0 0 1-1V6a1 1 0 0 0-1-1H9.5a1 1 0 0 1-1-1V3a1 1 0 0 0-1-1z" fill="#6fa3e8"/></svg>
<svg style="left:40.0px;top:693.0px" width="16" height="16" viewBox="0 0 16 16"><path d="M2 2a1 1 0 0 0-1 1v10a1 1 0 0 0 1 1h12a1 1 0 0 0 1-1V6a1 1 0 0 0-1-1H9.5a1 1 0 0 1-1-1V3a1 1 0 0 0-1-1z" fill="#6fa3e8"/></svg>
<svg style="left:40.0px;top:715.0px" width="16" height="16" viewBox="0 0 16 16"><path d="M2 2a1 1 0 0 0-1 1v10a1 1 0 0 0 1 1h12a1 1 0 0 0 1-1V6a1 1 0 0 0-1-1H9.5a1 1 0 0 1-1-1V3a1 1 0 0 0-1-1z" fill="#6fa3e8"/></svg>
<svg style="left:140.5px;top:798.0px" width="16" height="16" viewBox="0 0 16 16"><circle cx="6.3" cy="6.3" r="4.1" fill="none" stroke="#e0e0e0" stroke-width="2.1"/><path d="M9.5 9.5l4.3 4.3" stroke="#e0e0e0" stroke-width="2.4" stroke-linecap="round"/></svg>
<svg style="left:174.5px;top:798.0px" width="16" height="16" viewBox="0 0 16 16"><path d="M4 1L1 5h2v6H1l3 4 3-4H5V5h2z" fill="#e0e0e0"/><path d="M9 2h6v2H9zM9 7h4v2H9zM9 12h2v2H9z" fill="#e0e0e0"/></svg>
<svg style="left:207.0px;top:798.0px" width="16" height="16" viewBox="0 0 16 16"><path d="M2 2h5v5H2zM9 2h5v5H9zM2 9h5v5H2zM9 9h5v5H9z" fill="#e0e0e0"/></svg>
<svg style="left:15.0px;top:836.0px" width="16" height="16" viewBox="0 0 16 16"><path d="M2 2a1 1 0 0 0-1 1v10a1 1 0 0 0 1 1h12a1 1 0 0 0 1-1V6a1 1 0 0 0-1-1H9.5a1 1 0 0 1-1-1V3a1 1 0 0 0-1-1z" fill="#6fa3e8"/></svg>
<svg style="left:15.0px;top:858.0px" width="16" height="16" viewBox="0 0 16 16"><path d="M1 6.800h14V13a2 2 0 0 1-2 2H3a2 2 0 0 1-2-2z" fill="#e0e0e0"/><g transform="rotate(-9 8 4)" fill="#e0e0e0"><rect x="1.300" y="2.900" width="2.500" height="2.500"/><rect x="5" y="2.900" width="2.500" height="2.500"/><rect x="8.700" y="2.900" width="2.500" height="2.500"/><rect x="12.400" y="2.900" width="2.500" height="2.500"/></g></svg>
<svg style="left:15.0px;top:880.0px" width="16" height="16" viewBox="0 0 16 16"><path d="M1 6.800h14V13a2 2 0 0 1-2 2H3a2 2 0 0 1-2-2z" fill="#e0e0e0"/><g transform="rotate(-9 8 4)" fill="#e0e0e0"><rect x="1.300" y="2.900" width="2.500" height="2.500"/><rect x="5" y="2.900" width="2.500" height="2.500"/><rect x="8.700" y="2.900" width="2.500" height="2.500"/><rect x="12.400" y="2.900" width="2.500" height="2.500"/></g></svg>
<svg style="left:15.0px;top:902.0px" width="16" height="16" viewBox="0 0 16 16"><path d="M1 6.800h14V13a2 2 0 0 1-2 2H3a2 2 0 0 1-2-2z" fill="#e0e0e0"/><g transform="rotate(-9 8 4)" fill="#e0e0e0"><rect x="1.300" y="2.900" width="2.500" height="2.500"/><rect x="5" y="2.900" width="2.500" height="2.500"/><rect x="8.700" y="2.900" width="2.500" height="2.500"/><rect x="12.400" y="2.900" width="2.500" height="2.500"/></g></svg>
<svg style="left:15.0px;top:924.0px" width="16" height="16" viewBox="0 0 16 16"><path d="M1 6.800h14V13a2 2 0 0 1-2 2H3a2 2 0 0 1-2-2z" fill="#e0e0e0"/><g transform="rotate(-9 8 4)" fill="#e0e0e0"><rect x="1.300" y="2.900" width="2.500" height="2.500"/><rect x="5" y="2.900" width="2.500" height="2.500"/><rect x="8.700" y="2.900" width="2.500" height="2.500"/><rect x="12.400" y="2.900" width="2.500" height="2.500"/></g></svg>
<svg style="left:15.0px;top:946.0px" width="16" height="16" viewBox="0 0 16 16"><path d="M1 6.800h14V13a2 2 0 0 1-2 2H3a2 2 0 0 1-2-2z" fill="#e0e0e0"/><g transform="rotate(-9 8 4)" fill="#e0e0e0"><rect x="1.300" y="2.900" width="2.500" height="2.500"/><rect x="5" y="2.900" width="2.500" height="2.500"/><rect x="8.700" y="2.900" width="2.500" height="2.500"/><rect x="12.400" y="2.900" width="2.500" height="2.500"/></g></svg>
<svg style="left:15.0px;top:968.0px" width="16" height="16" viewBox="0 0 16 16"><path d="M1 6.800h14V13a2 2 0 0 1-2 2H3a2 2 0 0 1-2-2z" fill="#e0e0e0"/><g transform="rotate(-9 8 4)" fill="#e0e0e0"><rect x="1.300" y="2.900" width="2.500" height="2.500"/><rect x="5" y="2.900" width="2.500" height="2.500"/><rect x="8.700" y="2.900" width="2.500" height="2.500"/><rect x="12.400" y="2.900" width="2.500" height="2.500"/></g></svg>
<svg style="left:767.0px;top:13.0px" width="16" height="16" viewBox="0 0 16 16"><path d="M4.500 14.500V5a1.500 1.500 0 0 1 1.500-1.500h5.500" fill="none" stroke="#6ea8f2" stroke-width="2"/><path d="M1.500 11l3 4 3-4zM11 1l4 2.500-4 2.500z" fill="#6ea8f2"/></svg>
<svg style="left:828.7px;top:13.0px" width="16" height="16" viewBox="0 0 16 16"><path d="M4 11.500V5M4.200 11.800L11 11.800M4 11.500L10.500 5" fill="none" stroke="#e0e0e0" stroke-width="1.900"/><path d="M1.200 5.500L4 1.500l2.800 4zM10.500 9l4 2.800-4 2.800zM8.300 3.300l4.400-.4-.4 4.400z" fill="#e0e0e0"/></svg>
<svg style="left:890.3px;top:13.0px" width="16" height="16" viewBox="0 0 16 16"><path d="M6 1v1a1 1 0 0 0-1 1v10H4v-2H2v2a1 1 0 0 0 .5.866A1 1 0 0 0 3 15h7a2 2 0 0 0 2-2V5h3V3a2 2 0 0 0-2-2z" fill="#e0e0e0"/></svg>
<svg style="left:977.7px;top:13.0px" width="16" height="16" viewBox="0 0 16 16"><circle cx="8" cy="3.800" r="2.800" fill="#e0e0e0"/><rect x="7" y="5" width="2" height="5.500" fill="#e0e0e0"/><path d="M1.500 11.500a1 1 0 0 1 1-1h11a1 1 0 0 1 1 1V14a1 1 0 0 1-1 1h-11a1 1 0 0 1-1-1z" fill="#e0e0e0"/></svg>
<svg style="left:1063.7px;top:13.0px" width="16" height="16" viewBox="0 0 16 16"><path d="M7 1.500h2v6h2.800L8 11.500 4.200 7.500H7z" fill="#e0e0e0"/><path d="M1.500 9.500h2v3.500h9V9.500h2V15h-13z" fill="#e0e0e0"/></svg>
<svg style="left:1594.7px;top:13.0px" width="16" height="16" viewBox="0 0 16 16"><path d="M4.300 3v10a.7.700 0 0 0 1.100.600l7.800-5a.7.700 0 0 0 0-1.200l-7.800-5A.7.700 0 0 0 4.300 3z" fill="#d4d4d4"/></svg>
<svg style="left:1627.7px;top:13.0px" width="16" height="16" viewBox="0 0 16 16"><rect x="3" y="3" width="3.600" height="10" rx=".8" fill="#6e6e6e"/><rect x="9.400" y="3" width="3.600" height="10" rx=".8" fill="#6e6e6e"/></svg>
<svg style="left:1659.7px;top:13.0px" width="16" height="16" viewBox="0 0 16 16"><rect x="3" y="3" width="10" height="10" rx="1.200" fill="#6e6e6e"/></svg>
<svg style="left:1692.0px;top:13.0px" width="16" height="16" viewBox="0 0 16 16"><path d="M2 2a1 1 0 0 0-1 1v7a1 1 0 0 0 1 1h4.500v1.500H4.500V14h7v-1.500H9.500V11H14a1 1 0 0 0 1-1V3a1 1 0 0 0-1-1z" fill="#6e6e6e"/><path d="M6.500 4.200v4.600L10.200 6.500z" fill="#141414"/></svg>
<svg style="left:1723.7px;top:13.0px" width="16" height="16" viewBox="0 0 16 16"><path d="M1 6.800h14V13a2 2 0 0 1-2 2H3a2 2 0 0 1-2-2z" fill="#e0e0e0"/><g transform="rotate(-9 8 4)" fill="#e0e0e0"><rect x="1.300" y="2.900" width="2.500" height="2.500"/><rect x="5" y="2.900" width="2.500" height="2.500"/><rect x="8.700" y="2.900" width="2.500" height="2.500"/><rect x="12.400" y="2.900" width="2.500" height="2.500"/></g><path d="M6 8.400v5.200l4.600-2.600z" fill="#141414"/></svg>
<svg style="left:1756.0px;top:13.0px" width="16" height="16" viewBox="0 0 16 16"><path d="M1 6.800h14V13a2 2 0 0 1-2 2H3a2 2 0 0 1-2-2z" fill="#e0e0e0"/><g transform="rotate(-9 8 4)" fill="#e0e0e0"><rect x="1.300" y="2.900" width="2.500" height="2.500"/><rect x="5" y="2.900" width="2.500" height="2.500"/><rect x="8.700" y="2.900" width="2.500" height="2.500"/><rect x="12.400" y="2.900" width="2.500" height="2.500"/></g><path d="M3 8.500h3.200l1 1H13v3.700H3z" fill="#141414"/></svg>
<svg style="left:1788.0px;top:13.0px" width="16" height="16" viewBox="0 0 16 16"><circle cx="7" cy="7" r="6" fill="#e0e0e0"/><circle cx="7" cy="3.600" r="1.300" fill="#141414"/><circle cx="3.700" cy="6" r="1.300" fill="#141414"/><circle cx="10.300" cy="6" r="1.300" fill="#141414"/><circle cx="5" cy="9.900" r="1.300" fill="#141414"/><circle cx="9" cy="9.900" r="1.300" fill="#141414"/><circle cx="10.500" cy="10.500" r="2.700" fill="#141414" stroke="#e0e0e0" stroke-width="1.500"/><path d="M12.500 12.500l2.500 2.500" stroke="#e0e0e0" stroke-width="2" stroke-linecap="round"/></svg>
<svg style="left:1894.0px;top:13.5px" width="16" height="16" viewBox="0 0 16 16"><path d="M4 6l4 4 4-4" fill="none" stroke="#639841" stroke-width="1.9" stroke-linecap="round" stroke-linejoin="round"/></svg>
<svg style="left:253.7px;top:51.0px" width="16" height="16" viewBox="0 0 16 16"><circle cx="8" cy="8" r="5" fill="none" stroke="#5b74b6" stroke-width="2"/></svg>
<svg style="left:342.7px;top:51.0px" width="16" height="16" viewBox="0 0 16 16"><path d="M6.400 1.300h4.500a1.200 1.200 0 0 1 1.200 1.200v2.300a1.200 1.200 0 0 1-1.200 1.200H6.400a1.200 1.200 0 0 1-1.200-1.200V2.500a1.200 1.200 0 0 1 1.200-1.200zm.300 1.700v1.400h1.500V3z" fill="#5b74b6" fill-rule="evenodd"/><path d="M2.600 5.800L5.800 8.600 8.600 7.200M8.600 6.500L7.600 11M9.600 8.200l4.200 1.200V8.200M7.600 11L2.400 14.500M8 10.800l3 3h2.900" fill="none" stroke="#5b74b6" stroke-width="2.300" stroke-linejoin="round" stroke-linecap="butt"/></svg>
<svg style="left:437.0px;top:51.0px" width="16" height="16" viewBox="0 0 16 16"><path d="M6.400 1.300h4.500a1.200 1.200 0 0 1 1.200 1.200v2.300a1.200 1.200 0 0 1-1.200 1.200H6.400a1.200 1.200 0 0 1-1.200-1.200V2.500a1.200 1.200 0 0 1 1.200-1.200zm.300 1.700v1.400h1.500V3z" fill="#5b74b6" fill-rule="evenodd"/><path d="M2.600 5.800L5.800 8.600 8.600 7.200M8.600 6.500L7.600 11M9.600 8.200l4.200 1.200V8.200M7.600 11L2.400 14.500M8 10.800l3 3h2.900" fill="none" stroke="#5b74b6" stroke-width="2.300" stroke-linejoin="round" stroke-linecap="butt"/></svg>
<svg style="left:533.7px;top:51.0px" width="16" height="16" viewBox="0 0 16 16"><path d="M1 1v4h2V3h2V1zM11 1v2h2v2h2V1zM1 11v4h4v-2H3v-2zM13 11v2h-2v2h4v-4z" fill="#5b74b6"/><path d="M4.300 4.300h7.400v7.400H4.300zm2 2v3.400h3.400V6.300z" fill="#5b74b6" fill-rule="evenodd"/></svg>
<svg style="left:672.7px;top:51.0px" width="16" height="16" viewBox="0 0 16 16"><circle cx="8" cy="8" r="5" fill="none" stroke="#8eef97" stroke-width="2"/></svg>
<svg style="left:804.0px;top:51.0px" width="16" height="16" viewBox="0 0 16 16"><path d="M3.500 3.500l9 9M12.500 3.500l-9 9" stroke="#f0f0f0" stroke-width="2" stroke-linecap="round"/></svg>
<svg style="left:852.0px;top:51.0px" width="16" height="16" viewBox="0 0 16 16"><path d="M6.400 1.300h4.500a1.200 1.200 0 0 1 1.200 1.200v2.300a1.200 1.200 0 0 1-1.200 1.200H6.400a1.200 1.200 0 0 1-1.200-1.200V2.500a1.200 1.200 0 0 1 1.200-1.200zm.300 1.700v1.400h1.500V3z" fill="#5b74b6" fill-rule="evenodd"/><path d="M2.600 5.800L5.800 8.600 8.600 7.200M8.600 6.500L7.600 11M9.600 8.200l4.200 1.200V8.200M7.600 11L2.400 14.500M8 10.800l3 3h2.900" fill="none" stroke="#5b74b6" stroke-width="2.300" stroke-linejoin="round" stroke-linecap="butt"/></svg>
<svg style="left:935.3px;top:51.0px" width="16" height="16" viewBox="0 0 16 16"><path d="M1 1v4h2V3h2V1zM11 1v2h2v2h2V1zM1 11v4h4v-2H3v-2zM13 11v2h-2v2h4v-4z" fill="#5b74b6"/><path d="M4.300 4.300h7.400v7.400H4.300zm2 2v3.400h3.400V6.300z" fill="#5b74b6" fill-rule="evenodd"/></svg>
<svg style="left:1046.7px;top:50.0px" width="18" height="18" viewBox="0 0 16 16"><path d="M7 1.5v5.5H1.5v2H7v5.5h2V9h5.5V7H9V1.5z" fill="#a0a0a0"/></svg>
<svg style="left:1606.0px;top:51.0px" width="16" height="16" viewBox="0 0 16 16"><circle cx="8" cy="2.800" r="1.750" fill="#e0e0e0"/><circle cx="8" cy="8" r="1.750" fill="#e0e0e0"/><circle cx="8" cy="13.200" r="1.750" fill="#e0e0e0"/></svg>
<svg style="left:1637.7px;top:51.0px" width="16" height="16" viewBox="0 0 16 16"><path d="M1.500 1.500h4.200L4.300 2.900l2.300 2.300-1.400 1.400-2.300-2.300-1.400 1.400zM14.500 1.500v4.200l-1.400-1.400-2.300 2.300-1.400-1.400 2.300-2.300-1.400-1.400zM1.500 14.500v-4.200l1.400 1.400 2.300-2.300 1.400 1.400-2.300 2.300 1.400 1.400zM14.500 14.500h-4.200l1.400-1.400-2.300-2.300 1.400-1.400 2.300 2.300 1.400-1.400z" fill="#e0e0e0"/></svg>
<svg style="left:248.0px;top:87.0px" width="16" height="16" viewBox="0 0 16 16"><path d="M2.5 2.5l3.700 11.200 2-4.500 4 4 1.700-1.700-4-4 4.400-2.100z" fill="#6ea8f2"/></svg>
<svg style="left:292.0px;top:87.0px" width="16" height="16" viewBox="0 0 16 16"><path d="M8 .8L5.2 4h5.6zM8 15.2L10.8 12H5.2zM.8 8L4 10.8V5.2zM15.2 8L12 5.2v5.6z" fill="#e0e0e0"/><circle cx="8" cy="8" r="2" fill="#e0e0e0"/></svg>
<svg style="left:323.7px;top:87.0px" width="16" height="16" viewBox="0 0 16 16"><path d="M3.300 11.200A5.500 5.500 0 1 1 12.700 11.200L11.800 13" fill="none" stroke="#e0e0e0" stroke-width="2.100" stroke-linecap="round" stroke-linejoin="round"/><path d="M.8 8.800l5.200.9-3.300 4.300z" fill="#e0e0e0"/><circle cx="8" cy="8" r="2" fill="#e0e0e0"/></svg>
<svg style="left:356.0px;top:87.0px" width="16" height="16" viewBox="0 0 16 16"><path d="M9.500 2.500h4v4M13.300 2.700L11 5M6.500 13.500h-4v-4M2.700 13.300L5 11" fill="none" stroke="#e0e0e0" stroke-width="2" stroke-linecap="round" stroke-linejoin="round"/><circle cx="8" cy="8" r="2" fill="#e0e0e0"/></svg>
<svg style="left:399.3px;top:87.0px" width="16" height="16" viewBox="0 0 16 16"><path d="M2 2h10v2.2H4.2v2.3H10v2H4.2v2.8H8v2.2H2z" fill="#e0e0e0"/><path transform="translate(8.3 8.2) scale(0.95)" d="M0 0l2.2 7.6 1.5-2.7 2.6 2.6 1.4-1.4-2.6-2.6 2.7-1.5z" fill="#e0e0e0"/></svg>
<svg style="left:432.0px;top:87.0px" width="16" height="16" viewBox="0 0 16 16"><path d="M6 1h2v3.2H6zM1 6h3.4v2H1zM10.2 6H13v2h-2.8zM6 10h2v3H6z" fill="#e0e0e0" transform="translate(0 0)"/><path transform="translate(7.2 7.2) scale(1.02)" d="M0 0l2.2 7.6 1.5-2.7 2.6 2.6 1.4-1.4-2.6-2.6 2.7-1.5z" fill="#e0e0e0"/></svg>
<svg style="left:463.7px;top:87.0px" width="16" height="16" viewBox="0 0 16 16"><path d="M8 1.2a1 1 0 0 0-1 1V7H6.3V2.6a1 1 0 0 0-2 0V9.3L3.1 8.1a1.2 1.2 0 0 0-1.8 1.5l3.2 4.3c.5.7 1.3 1.1 2.2 1.1h3.6a3 3 0 0 0 3-3V4a1 1 0 0 0-2 0v3h-.7V2.6a1 1 0 0 0-2 0V7H9V2.2a1 1 0 0 0-1-1z" fill="#e0e0e0"/></svg>
<svg style="left:495.3px;top:87.0px" width="16" height="16" viewBox="0 0 16 16"><path d="M1.500 1.300v13.200h13.200zm2.300 5.600l5.300 5.300H3.800z" fill="#e0e0e0" fill-rule="evenodd"/></svg>
<svg style="left:539.7px;top:87.0px" width="16" height="16" viewBox="0 0 16 16"><path d="M8 .9L1.600 4.300v7.400L8 15.100l6.400-3.400V4.300z" fill="#6ea8f2"/><path d="M7.600 3.700L5 5.100l2.600 1.400 2.600-1.400z" fill="#3a3a3a"/><path d="M8 8.500v5" stroke="#3a3a3a" stroke-width="1.300"/><path d="M9.500 8.300l3.200-1.700v3.500l-3.200 1.700z" fill="#3a3a3a" opacity=".0"/></svg>
<svg style="left:572.0px;top:87.0px" width="16" height="16" viewBox="0 0 16 16"><path d="M7 15V10.5a3.5 3.5 0 0 1 7 0V15h-2v-4.5a1.5 1.5 0 0 0-3 0V15z" fill="#e0e0e0"/><rect x="2" y="2" width="2" height="2" fill="#e0e0e0"/><rect x="7" y="2" width="2" height="2" fill="#e0e0e0"/><rect x="2" y="7" width="2" height="2" fill="#e0e0e0"/></svg>
<svg style="left:603.7px;top:87.0px" width="16" height="16" viewBox="0 0 16 16"><path d="M3 1v2H1v2h2v4H1v2h2v3h2v-3h2V9H5V5h4v1h2V5h3V3h-3V1H9v2H5V1z" fill="#e0e0e0"/><path d="M8 15v-3.5a3 3 0 0 1 6 0V15h-2v-3.5a1 1 0 0 0-2 0V15z" fill="#e0e0e0"/></svg>
<svg style="left:635.3px;top:87.0px" width="16" height="16" viewBox="0 0 16 16"><circle cx="8" cy="2.800" r="1.750" fill="#e0e0e0"/><circle cx="8" cy="8" r="1.750" fill="#e0e0e0"/><circle cx="8" cy="13.200" r="1.750" fill="#e0e0e0"/></svg>
<svg style="left:679.7px;top:87.0px" width="16" height="16" viewBox="0 0 16 16"><path d="M8 1a4 4 0 0 0-4 4v2H3a1 1 0 0 0-1 1v6a1 1 0 0 0 1 1h10a1 1 0 0 0 1-1V8a1 1 0 0 0-1-1h-1V5a4 4 0 0 0-4-4zm0 2a2 2 0 0 1 2 2v2H6V5a2 2 0 0 1 2-2zm0 6.5a1.3 1.3 0 0 1 .7 2.4V13H7.3v-1.1A1.3 1.3 0 0 1 8 9.5z" fill="#e0e0e0" fill-rule="evenodd"/></svg>
<svg style="left:712.0px;top:87.0px" width="16" height="16" viewBox="0 0 16 16"><rect x="1" y="1" width="2" height="2" fill="#e0e0e0"/><rect x="1" y="13" width="2" height="2" fill="#e0e0e0"/><rect x="13" y="13" width="2" height="2" fill="#e0e0e0"/><rect x="7.500" y="1.500" width="7" height="7" fill="#5a5a5a" stroke="#e0e0e0" stroke-width="1"/><rect x="3" y="7" width="6" height="6" fill="#8a8a8a"/></svg>
<svg style="left:755.7px;top:87.0px" width="16" height="16" viewBox="0 0 16 16"><path d="M10.5 1.2a2.4 2.4 0 0 0-2.1 3.6L4.8 8.4a2.4 2.4 0 1 0-1.3 4.1 2.4 2.4 0 1 0 4.1-1.3l3.6-3.6a2.4 2.4 0 1 0 1.3-4.1 2.4 2.4 0 0 0-2-2.3z" fill="#e0e0e0"/></svg>
<svg style="left:860.7px;top:87.0px" width="16" height="16" viewBox="0 0 16 16"><circle cx="8" cy="8" r="6.300" fill="none" stroke="#8eef97" stroke-width="2"/><path d="M7 4.300h2V7h2.700v2H9v2.700H7V9H4.300V7H7z" fill="#e3f7e5"/></svg>
<svg style="left:881.7px;top:89.5px" width="12" height="12" viewBox="0 0 16 16"><path d="M4 6l4 4 4-4" fill="none" stroke="#b0b0b0" stroke-width="1.8" stroke-linecap="round" stroke-linejoin="round"/></svg>
<svg style="left:904.7px;top:87.0px" width="16" height="16" viewBox="0 0 16 16"><circle cx="8" cy="3.100" r="1.700" fill="none" stroke="#e0e0e0" stroke-width="1.800"/><path d="M8 5v9.200M5 7.600h6" stroke="#e0e0e0" stroke-width="2.100" fill="none"/><path d="M2.300 9.500c.3 3 2.700 4.700 5.700 4.700s5.400-1.700 5.700-4.700" fill="none" stroke="#e0e0e0" stroke-width="2.100"/><path d="M.5 11.300l1.800-3.400 2.400 2.800zM15.500 11.300l-1.800-3.400-2.400 2.800z" fill="#e0e0e0"/></svg>
<svg style="left:267.0px;top:145.3px" width="16" height="16" viewBox="0 0 16 16"><rect x="6.400" y="6.400" width="3.200" height="3.200" fill="#d8d8d8"/><path d="M5.800 2L8 4.200 10.200 2M5.800 14L8 11.800l2.200 2.200M2 5.800L4.200 8 2 10.200M14 5.800L11.800 8l2.200 2.200" fill="none" stroke="#d8d8d8" stroke-width="1.600" stroke-linecap="round" stroke-linejoin="round"/></svg>
<svg style="left:302.7px;top:145.3px" width="16" height="16" viewBox="0 0 16 16"><circle cx="8" cy="8" r="7" fill="#d8d8d8"/><rect x="4" y="7" width="8" height="2" fill="#4d4d4d"/></svg>
<svg style="left:399.7px;top:145.3px" width="16" height="16" viewBox="0 0 16 16"><circle cx="8" cy="8" r="7" fill="#d8d8d8"/><path d="M7 4h2v3h3v2H9v3H7V9H4V7h3z" fill="#4d4d4d"/></svg>
<svg style="left:1867.0px;top:51.0px" width="16" height="16" viewBox="0 0 16 16"><circle cx="8" cy="8" r="6.500" fill="#9a9a9a"/><path d="M9.500 4.500L6 8l3.500 3.500" fill="none" stroke="#141414" stroke-width="2" stroke-linecap="round" stroke-linejoin="round"/></svg>
<svg style="left:1882.7px;top:51.0px" width="16" height="16" viewBox="0 0 16 16"><circle cx="8" cy="8" r="6.500" fill="#e0e0e0"/><path d="M6.500 4.500L10 8l-3.500 3.500" fill="none" stroke="#141414" stroke-width="2" stroke-linecap="round" stroke-linejoin="round"/></svg>
<svg style="left:1899.0px;top:51.0px" width="16" height="16" viewBox="0 0 16 16"><circle cx="8" cy="2.800" r="1.750" fill="#9a9a9a"/><circle cx="8" cy="8" r="1.750" fill="#9a9a9a"/><circle cx="8" cy="13.200" r="1.750" fill="#9a9a9a"/></svg>
<svg style="left:1676.3px;top:84.7px" width="16" height="16" viewBox="0 0 16 16"><path d="M3 1a1 1 0 0 0-1 1v12a1 1 0 0 0 1 1h5v-1.500H6.500v-3.500H8.500V8H12V6H8V1zM9 1v4h4z" fill="#e0e0e0"/><path d="M13 13.200h2v-2.400h-2v-2h-2.400v2h-2v2.400h2v2H13z" fill="#5fe07a"/></svg>
<svg style="left:1707.7px;top:84.7px" width="16" height="16" viewBox="0 0 16 16"><path d="M1.500 3a1 1 0 0 1 1-1H6l1.500 1.500H12a1 1 0 0 1 1 1V6H5L2.500 12.500 1.500 12z" fill="#e0e0e0"/><path d="M5.500 7H15.500l-2.700 7H2.800z" fill="#e0e0e0"/></svg>
<svg style="left:1739.7px;top:84.7px" width="16" height="16" viewBox="0 0 16 16"><path d="M3 1a2 2 0 0 0-2 2v10a2 2 0 0 0 2 2h10a2 2 0 0 0 2-2V4l-3-3h-1v5H4V1zm5 0v4h2V1zm0 8a2 2 0 0 1 0 4 2 2 0 0 1 0-4z" fill="#6e6e6e" fill-rule="evenodd"/></svg>
<svg style="left:1771.7px;top:84.7px" width="16" height="16" viewBox="0 0 16 16"><circle cx="8" cy="2.800" r="1.750" fill="#e0e0e0"/><circle cx="8" cy="8" r="1.750" fill="#e0e0e0"/><circle cx="8" cy="13.200" r="1.750" fill="#e0e0e0"/></svg>
<svg style="left:1836px;top:84.700px" width="16" height="16" viewBox="0 0 16 16"><path d="M10.200 2.200L6.300 8l3.900 5.800" fill="none" stroke="#e0e0e0" stroke-width="1.900" stroke-linecap="round" stroke-linejoin="round"/></svg>
<svg style="left:1859.700px;top:84.700px" width="16" height="16" viewBox="0 0 16 16"><path d="M5.800 2.200L9.700 8l-3.900 5.800" fill="none" stroke="#6a6a6a" stroke-width="1.900" stroke-linecap="round" stroke-linejoin="round"/></svg>
<svg style="left:1888.0px;top:84.7px" width="16" height="16" viewBox="0 0 16 16"><path d="M4.600 11.600A4.900 4.900 0 1 0 3.700 6.800" fill="none" stroke="#e0e0e0" stroke-width="1.900" stroke-linecap="round"/><path d="M.8 5.800l5 .5-3 3.900z" fill="#e0e0e0"/><path d="M8.800 5.300v3.200h2.700" fill="none" stroke="#e0e0e0" stroke-width="1.700" stroke-linecap="round"/></svg>
<svg style="left:1853.7px;top:117.5px" width="16" height="16" viewBox="0 0 16 16"><path d="M4 6l4 4 4-4" fill="none" stroke="#e0e0e0" stroke-width="2.2" stroke-linecap="round" stroke-linejoin="round"/></svg>
<svg style="left:1887.7px;top:117.0px" width="16" height="16" viewBox="0 0 16 16"><circle cx="10" cy="3.900" r="2.700" fill="none" stroke="#e0e0e0" stroke-width="1.900"/><path d="M8 5.900L5.300 8.600" stroke="#e0e0e0" stroke-width="2" stroke-linecap="round"/><text x="8" y="15.200" font-size="7.200" font-weight="700" text-anchor="middle" fill="#e0e0e0" stroke="#e0e0e0" stroke-width=".35" font-family="Liberation Sans, sans-serif" letter-spacing="-.1">DOC</text></svg>
<svg style="left:1853.0px;top:152.0px" width="16" height="16" viewBox="0 0 16 16"><circle cx="6.3" cy="6.3" r="4.1" fill="none" stroke="#e0e0e0" stroke-width="2.1"/><path d="M9.5 9.5l4.3 4.3" stroke="#e0e0e0" stroke-width="2.4" stroke-linecap="round"/></svg>
<svg style="left:1887.7px;top:152.0px" width="16" height="16" viewBox="0 0 16 16"><path d="M4.500 1.500v8" stroke="#e0e0e0" stroke-width="1.800" stroke-linecap="round" fill="none"/><path d="M2.400 9.200h4.200v3.300a2.100 2.100 0 0 1-4.200 0z" fill="#e0e0e0"/><path d="M9.400 1.500v3a2.100 2.100 0 0 0 4.200 0v-3" fill="none" stroke="#e0e0e0" stroke-width="1.800" stroke-linecap="round"/><path d="M11.500 6.500v8" stroke="#e0e0e0" stroke-width="2" stroke-linecap="round"/></svg>
<svg style="left:1753.0px;top:192.7px" width="16" height="16" viewBox="0 0 16 16"><circle cx="8" cy="8" r="5" fill="none" stroke="#8eef97" stroke-width="2"/></svg>
<svg style="left:1735.8px;top:454.7px" width="16" height="16" viewBox="0 0 16 16"><path d="M13.500 1.200a1.300 1.300 0 0 1 1.300 1.900L8.500 9.500 6.500 7.500z" fill="#a5a5a5"/><path d="M5.500 8.500l2 2c.5 2-1.500 4-5.500 4 1.500-1 1-4 3.500-6z" fill="#a5a5a5"/></svg>
<svg style="left:1759.8px;top:591.7px" width="16" height="16" viewBox="0 0 16 16"><circle cx="8" cy="8" r="5" fill="none" stroke="#e0e0e0" stroke-width="2"/></svg>
<svg style="left:1861.8px;top:727.5px" width="16" height="16" viewBox="0 0 16 16"><path d="M1.500 3a1 1 0 0 1 1-1H6l1.500 1.500H12a1 1 0 0 1 1 1V6H5L2.500 12.500 1.500 12z" fill="#e0e0e0"/><path d="M5.500 7H15.500l-2.700 7H2.800z" fill="#e0e0e0"/><path d="M11.500 8l-3 4h2l-1 3 3.500-4.300h-2z" fill="#e8c65a" stroke="#1c1c1c" stroke-width=".5"/></svg>
<svg style="left:1888.8px;top:728.0px" width="16" height="16" viewBox="0 0 16 16"><path d="M4 6l4 4 4-4" fill="none" stroke="#e0e0e0" stroke-width="2" stroke-linecap="round" stroke-linejoin="round"/></svg>
<svg style="left:1730.8px;top:770.0px" width="16" height="16" viewBox="0 0 16 16"><path d="M7 1.5v5.5H1.5v2H7v5.5h2V9h5.5V7H9V1.5z" fill="#e0e0e0"/></svg>
<svg style="left:688.4px;top:783.5px" width="16" height="16" viewBox="0 0 16 16"><path d="M4 6l4 4 4-4" fill="none" stroke="#9a9a9a" stroke-width="2" stroke-linecap="round" stroke-linejoin="round"/></svg>
<svg style="left:1159.5px;top:782.7px" width="16" height="16" viewBox="0 0 16 16"><circle cx="6.3" cy="6.3" r="4.1" fill="none" stroke="#e0e0e0" stroke-width="2.1"/><path d="M9.5 9.5l4.3 4.3" stroke="#e0e0e0" stroke-width="2.4" stroke-linecap="round"/></svg>
<svg style="left:1374.3px;top:752.0px" width="16" height="16" viewBox="0 0 16 16"><circle cx="8" cy="8" r="6" fill="#e5524f"/></svg>
<svg style="left:1407.0px;top:752.0px" width="16" height="16" viewBox="0 0 16 16"><g transform="rotate(18 8 8)"><path d="M8 1a1.200 1.200 0 0 1 1.200 1.200c2 .6 3.300 2.400 3.300 4.600v3l1.600 2.200v1H1.900v-1l1.600-2.200v-3c0-2.200 1.300-4 3.300-4.600A1.200 1.200 0 0 1 8 1z" fill="#ee7a6f"/><circle cx="8" cy="14.300" r="1.400" fill="#ee7a6f"/></g></svg>
<svg style="left:1450.8px;top:752.0px" width="16" height="16" viewBox="0 0 16 16"><path d="M1.500 1h9.500v1.600H3.100v8.900H1.500z" fill="#8a8a8a"/><rect x="5" y="4.800" width="9.500" height="10" fill="none" stroke="#8a8a8a" stroke-width="1.600"/></svg>
<svg style="left:1494.7px;top:752.0px" width="16" height="16" viewBox="0 0 16 16"><path d="M7.800 .9h7.700v1.500H7.800zM7.800 4.950h7.700v1.500H7.800zM7.800 9h7.700v1.500H7.800zM7.800 13.050h7.700v1.500H7.800z" fill="#787878"/><path d="M2.100 1v8.300h2.500" fill="none" stroke="#b5503f" stroke-width="1.700"/><path d="M4 6.500l3.300 2.800L4 12.100z" fill="#b5503f"/></svg>
<svg style="left:1527.0px;top:752.0px" width="16" height="16" viewBox="0 0 16 16"><path d="M7.800 .9h7.700v1.500H7.800zM7.800 4.950h7.700v1.500H7.800zM7.800 9h7.700v1.500H7.800zM7.800 13.050h7.700v1.500H7.800z" fill="#787878"/><path d="M3.600 1v10" fill="none" stroke="#b5503f" stroke-width="1.700"/><path d="M.9 10h5.400l-2.700 4.500z" fill="#b5503f"/></svg>
<svg style="left:1559.0px;top:752.0px" width="16" height="16" viewBox="0 0 16 16"><path d="M7.800 .9h7.700v1.500H7.800zM7.800 4.950h7.700v1.500H7.800zM7.800 9h7.700v1.500H7.800zM7.800 13.050h7.700v1.500H7.800z" fill="#787878"/><path d="M3.600 15V5" fill="none" stroke="#b5503f" stroke-width="1.700"/><path d="M.9 6h5.400L3.600 1.500z" fill="#b5503f"/></svg>
<svg style="left:1602.7px;top:752.0px" width="16" height="16" viewBox="0 0 16 16"><rect x="3" y="3" width="3.600" height="10" rx=".8" fill="#b0b0b0"/><rect x="9.400" y="3" width="3.600" height="10" rx=".8" fill="#b0b0b0"/></svg>
<svg style="left:1634.5px;top:752.0px" width="16" height="16" viewBox="0 0 16 16"><circle cx="4" cy="8" r="3" fill="#7a7a7a"/><path d="M6 8h5" stroke="#a34d3f" stroke-width="2"/><path d="M10 4.200L15 8l-5 3.800z" fill="#a34d3f"/></svg>
<svg style="left:1437.7px;top:967.6px" width="16" height="16" viewBox="0 0 16 16"><circle cx="8" cy="2.800" r="1.750" fill="#9a9a9a"/><circle cx="8" cy="8" r="1.750" fill="#9a9a9a"/><circle cx="8" cy="13.200" r="1.750" fill="#9a9a9a"/></svg>
<svg style="left:1476.3px;top:967.6px" width="16" height="16" viewBox="0 0 16 16"><g transform="rotate(18 8 8)"><path d="M8 1a1.200 1.200 0 0 1 1.200 1.200c2 .6 3.300 2.400 3.300 4.600v3l1.600 2.200v1H1.900v-1l1.600-2.200v-3c0-2.200 1.300-4 3.300-4.600A1.200 1.200 0 0 1 8 1z" fill="#4a4a4a"/><circle cx="8" cy="14.300" r="1.400" fill="#4a4a4a"/></g></svg>
<svg style="left:1596.7px;top:967.6px" width="16" height="16" viewBox="0 0 16 16"><path d="M4 1.500h8v2h-1.200v4l2 2.500v1.500H9v3.500l-1 1-1-1V11.500H3.200V10l2-2.500v-4H4z" fill="#e0e0e0"/></svg>
<svg style="left:1632.7px;top:967.6px" width="16" height="16" viewBox="0 0 16 16"><path d="M1 1.500h14v2H1z" fill="#e0e0e0"/><path d="M4.500 5.500L1.500 9.500h2v5h2v-5h2zM11.500 5.500l-3 4h2v5h2v-5h2z" fill="#e0e0e0"/></svg>
</div></body></html>
